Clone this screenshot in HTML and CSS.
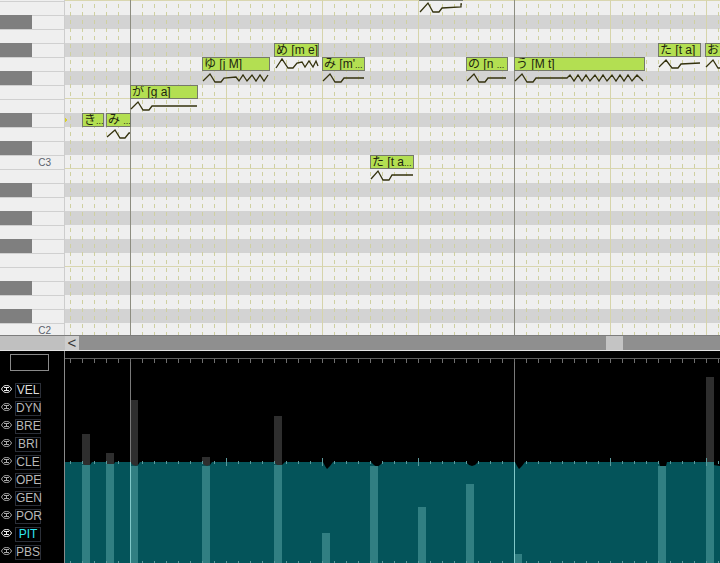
FILE: index.html
```html
<!DOCTYPE html>
<html lang="ja">

<head>
    <meta charset="UTF-8" />
    <title>Piano roll</title>
    <link rel="stylesheet" href="styles.css">
</head>

<body>
    <div class="roll-area">
        <div class="piano">
            <div class="key"></div>
            <div class="key black"></div>
            <div class="key"></div>
            <div class="key black"></div>
            <div class="key"></div>
            <div class="key black"></div>
            <div class="key"></div>
            <div class="key"></div>
            <div class="key black"></div>
            <div class="key"></div>
            <div class="key black"></div>
            <div class="key">C3</div>
            <div class="key"></div>
            <div class="key black"></div>
            <div class="key"></div>
            <div class="key black"></div>
            <div class="key"></div>
            <div class="key black"></div>
            <div class="key"></div>
            <div class="key"></div>
            <div class="key black"></div>
            <div class="key"></div>
            <div class="key black"></div>
            <div class="key">C2</div>
        </div>

        <div class="roll">
            <div class="bands">
                <div class="band"></div>
                <div class="band dark"></div>
                <div class="band"></div>
                <div class="band dark"></div>
                <div class="band"></div>
                <div class="band dark"></div>
                <div class="band"></div>
                <div class="band"></div>
                <div class="band dark"></div>
                <div class="band"></div>
                <div class="band dark"></div>
                <div class="band"></div>
                <div class="band"></div>
                <div class="band dark"></div>
                <div class="band"></div>
                <div class="band dark"></div>
                <div class="band"></div>
                <div class="band dark"></div>
                <div class="band"></div>
                <div class="band"></div>
                <div class="band dark"></div>
                <div class="band"></div>
                <div class="band dark"></div>
                <div class="band"></div>
            </div>

            <!-- viewBox is in page coordinates -->
            <svg class="overlay" viewBox="65 0 655 335">
                <g class="octave-lines">
                    <line x1="65" y1="0.5" x2="720" y2="0.5" />
                    <line x1="65" y1="98.5" x2="720" y2="98.5" />
                    <line x1="65" y1="168.5" x2="720" y2="168.5" />
                    <line x1="65" y1="266.5" x2="720" y2="266.5" />
                </g>
                <g class="sub-lines">
                    <line x1="70.5" y1="4" x2="70.5" y2="335" />
                    <line x1="82.5" y1="4" x2="82.5" y2="335" />
                    <line x1="94.5" y1="4" x2="94.5" y2="335" />
                    <line x1="106.5" y1="4" x2="106.5" y2="335" />
                    <line x1="118.5" y1="4" x2="118.5" y2="335" />
                    <line x1="142.5" y1="4" x2="142.5" y2="335" />
                    <line x1="154.5" y1="4" x2="154.5" y2="335" />
                    <line x1="166.5" y1="4" x2="166.5" y2="335" />
                    <line x1="178.5" y1="4" x2="178.5" y2="335" />
                    <line x1="190.5" y1="4" x2="190.5" y2="335" />
                    <line x1="202.5" y1="4" x2="202.5" y2="335" />
                    <line x1="214.5" y1="4" x2="214.5" y2="335" />
                    <line x1="238.5" y1="4" x2="238.5" y2="335" />
                    <line x1="250.5" y1="4" x2="250.5" y2="335" />
                    <line x1="262.5" y1="4" x2="262.5" y2="335" />
                    <line x1="274.5" y1="4" x2="274.5" y2="335" />
                    <line x1="286.5" y1="4" x2="286.5" y2="335" />
                    <line x1="298.5" y1="4" x2="298.5" y2="335" />
                    <line x1="310.5" y1="4" x2="310.5" y2="335" />
                    <line x1="334.5" y1="4" x2="334.5" y2="335" />
                    <line x1="346.5" y1="4" x2="346.5" y2="335" />
                    <line x1="358.5" y1="4" x2="358.5" y2="335" />
                    <line x1="370.5" y1="4" x2="370.5" y2="335" />
                    <line x1="382.5" y1="4" x2="382.5" y2="335" />
                    <line x1="394.5" y1="4" x2="394.5" y2="335" />
                    <line x1="406.5" y1="4" x2="406.5" y2="335" />
                    <line x1="430.5" y1="4" x2="430.5" y2="335" />
                    <line x1="442.5" y1="4" x2="442.5" y2="335" />
                    <line x1="454.5" y1="4" x2="454.5" y2="335" />
                    <line x1="466.5" y1="4" x2="466.5" y2="335" />
                    <line x1="478.5" y1="4" x2="478.5" y2="335" />
                    <line x1="490.5" y1="4" x2="490.5" y2="335" />
                    <line x1="502.5" y1="4" x2="502.5" y2="335" />
                    <line x1="526.5" y1="4" x2="526.5" y2="335" />
                    <line x1="538.5" y1="4" x2="538.5" y2="335" />
                    <line x1="550.5" y1="4" x2="550.5" y2="335" />
                    <line x1="562.5" y1="4" x2="562.5" y2="335" />
                    <line x1="574.5" y1="4" x2="574.5" y2="335" />
                    <line x1="586.5" y1="4" x2="586.5" y2="335" />
                    <line x1="598.5" y1="4" x2="598.5" y2="335" />
                    <line x1="622.5" y1="4" x2="622.5" y2="335" />
                    <line x1="634.5" y1="4" x2="634.5" y2="335" />
                    <line x1="646.5" y1="4" x2="646.5" y2="335" />
                    <line x1="658.5" y1="4" x2="658.5" y2="335" />
                    <line x1="670.5" y1="4" x2="670.5" y2="335" />
                    <line x1="682.5" y1="4" x2="682.5" y2="335" />
                    <line x1="694.5" y1="4" x2="694.5" y2="335" />
                    <line x1="718.5" y1="4" x2="718.5" y2="335" />
                </g>
                <g class="beat-lines">
                    <line x1="226.5" y1="0" x2="226.5" y2="335" />
                    <line x1="322.5" y1="0" x2="322.5" y2="335" />
                    <line x1="418.5" y1="0" x2="418.5" y2="335" />
                    <line x1="610.5" y1="0" x2="610.5" y2="335" />
                    <line x1="706.5" y1="0" x2="706.5" y2="335" />
                </g>
                <g class="cursor-lines">
                    <line x1="130.5" y1="0" x2="130.5" y2="335" />
                    <line x1="514.5" y1="0" x2="514.5" y2="335" />
                </g>
                <polygon class="marker" points="65,118 68,120 65,122" />
                <g class="waves">
                    <polyline points="107,137 115,130 120,138 125,138 129,133 130,133" />
                    <polyline points="131,109 138,102 143,110 149,110 152,106 197,106" />
                    <polyline points="203,81 210,74 215,82 221,82 224,78 236,77 239,81 243,75 247,81 252,75 256,81 260,75 264,81 268,75" />
                    <polyline points="276,68 282,59 288,68 293,68 297,63 302,62 305,67 309,61 313,67 316,61 318,66" />
                    <polyline points="323,81 330,74 335,82 341,82 344,78 364,78" />
                    <polyline points="371,179 378,171 383,180 389,180 392,175 413,175" />
                    <polyline points="420,12 428,3 433,12 439,12 442,8 461,7 461,4 462,4" />
                    <polyline points="467,81 474,74 479,82 485,82 488,78 506,78" />
                    <polyline points="515,81 522,74 527,82 533,82 536,78 567,78 570,75 574,81 578,75 582,81 586,75 590,81 595,75 599,81 603,75 607,81 612,75 616,81 620,75 624,81 628,75 632,81 637,75 643,81" />
                    <polyline points="659,67 666,60 672,68 678,68 681,64 700,63" />
                    <polyline points="706,67 713,60 718,68 720,68" />
                </g>
            </svg>

            <div class="note n-ki">き<span class="dots">...</span></div>
            <div class="note n-mi">み <span class="dots">...</span></div>
            <div class="note n-ga">が [g a]</div>
            <div class="note n-yu">ゆ [j M]</div>
            <div class="note n-me">め [m e]</div>
            <div class="note n-mi2">み [m'<span class="dots">...</span></div>
            <div class="note n-ta">た [t a<span class="dots">...</span></div>
            <div class="note n-top"></div>
            <div class="note n-no">の [n <span class="dots">...</span></div>
            <div class="note n-u">う [M t]</div>
            <div class="note n-ta2">た [t a]</div>
            <div class="note n-o">お</div>
        </div>
    </div>

    <div class="scrollbar">
        <div class="scroll-corner"></div>
        <div class="scroll-btn">&lt;</div>
        <div class="scroll-track">
            <div class="scroll-thumb"></div>
        </div>
    </div>

    <div class="lower">
        <div class="side">
            <div class="value-box"></div>
            <div class="curve-list">
                <div class="curve-row">
                    <svg class="eye" viewBox="0 0 11 8"><path d="M0.5 4 C2 1 3.5 0.5 5.5 0.5 C7.5 0.5 9 1 10.5 4 C9 7 7.5 7.5 5.5 7.5 C3.5 7.5 2 7 0.5 4 Z M3 2.5 H8 M3 5.5 H8 M5.5 3 V5" /></svg>
                    <div class="curve-label on">VEL</div>
                </div>
                <div class="curve-row">
                    <svg class="eye dim" viewBox="0 0 11 8"><path d="M0.5 4 C2 1 3.5 0.5 5.5 0.5 C7.5 0.5 9 1 10.5 4 C9 7 7.5 7.5 5.5 7.5 C3.5 7.5 2 7 0.5 4 Z M3 2.5 H8 M3 5.5 H8 M5.5 3 V5" /></svg>
                    <div class="curve-label">DYN</div>
                </div>
                <div class="curve-row">
                    <svg class="eye dim" viewBox="0 0 11 8"><path d="M0.5 4 C2 1 3.5 0.5 5.5 0.5 C7.5 0.5 9 1 10.5 4 C9 7 7.5 7.5 5.5 7.5 C3.5 7.5 2 7 0.5 4 Z M3 2.5 H8 M3 5.5 H8 M5.5 3 V5" /></svg>
                    <div class="curve-label">BRE</div>
                </div>
                <div class="curve-row">
                    <svg class="eye dim" viewBox="0 0 11 8"><path d="M0.5 4 C2 1 3.5 0.5 5.5 0.5 C7.5 0.5 9 1 10.5 4 C9 7 7.5 7.5 5.5 7.5 C3.5 7.5 2 7 0.5 4 Z M3 2.5 H8 M3 5.5 H8 M5.5 3 V5" /></svg>
                    <div class="curve-label">BRI</div>
                </div>
                <div class="curve-row">
                    <svg class="eye dim" viewBox="0 0 11 8"><path d="M0.5 4 C2 1 3.5 0.5 5.5 0.5 C7.5 0.5 9 1 10.5 4 C9 7 7.5 7.5 5.5 7.5 C3.5 7.5 2 7 0.5 4 Z M3 2.5 H8 M3 5.5 H8 M5.5 3 V5" /></svg>
                    <div class="curve-label">CLE</div>
                </div>
                <div class="curve-row">
                    <svg class="eye dim" viewBox="0 0 11 8"><path d="M0.5 4 C2 1 3.5 0.5 5.5 0.5 C7.5 0.5 9 1 10.5 4 C9 7 7.5 7.5 5.5 7.5 C3.5 7.5 2 7 0.5 4 Z M3 2.5 H8 M3 5.5 H8 M5.5 3 V5" /></svg>
                    <div class="curve-label">OPE</div>
                </div>
                <div class="curve-row">
                    <svg class="eye dim" viewBox="0 0 11 8"><path d="M0.5 4 C2 1 3.5 0.5 5.5 0.5 C7.5 0.5 9 1 10.5 4 C9 7 7.5 7.5 5.5 7.5 C3.5 7.5 2 7 0.5 4 Z M3 2.5 H8 M3 5.5 H8 M5.5 3 V5" /></svg>
                    <div class="curve-label">GEN</div>
                </div>
                <div class="curve-row">
                    <svg class="eye dim" viewBox="0 0 11 8"><path d="M0.5 4 C2 1 3.5 0.5 5.5 0.5 C7.5 0.5 9 1 10.5 4 C9 7 7.5 7.5 5.5 7.5 C3.5 7.5 2 7 0.5 4 Z M3 2.5 H8 M3 5.5 H8 M5.5 3 V5" /></svg>
                    <div class="curve-label">POR</div>
                </div>
                <div class="curve-row">
                    <svg class="eye" viewBox="0 0 11 8"><path d="M0.5 4 C2 1 3.5 0.5 5.5 0.5 C7.5 0.5 9 1 10.5 4 C9 7 7.5 7.5 5.5 7.5 C3.5 7.5 2 7 0.5 4 Z M3 2.5 H8 M3 5.5 H8 M5.5 3 V5" /></svg>
                    <div class="curve-label active">PIT</div>
                </div>
                <div class="curve-row">
                    <svg class="eye dim" viewBox="0 0 11 8"><path d="M0.5 4 C2 1 3.5 0.5 5.5 0.5 C7.5 0.5 9 1 10.5 4 C9 7 7.5 7.5 5.5 7.5 C3.5 7.5 2 7 0.5 4 Z M3 2.5 H8 M3 5.5 H8 M5.5 3 V5" /></svg>
                    <div class="curve-label">PBS</div>
                </div>
            </div>
        </div>

        <!-- viewBox is in page coordinates -->
        <svg class="curves" viewBox="65 351 655 212">
            <line class="ruler" x1="65" y1="358.5" x2="720" y2="358.5" />
            <line class="ruler-ticks" x1="70" y1="361" x2="720" y2="361" />

            <rect class="vel-bar" x="82" y="434" width="8" height="32" />
            <rect class="vel-bar" x="106" y="453" width="8" height="12" />
            <rect class="vel-bar" x="130" y="400" width="8" height="66" />
            <rect class="vel-bar" x="202" y="457" width="8" height="9" />
            <rect class="vel-bar" x="274" y="416" width="8" height="51" />
            <rect class="vel-bar" x="706" y="377" width="8" height="89" />

            <polygon class="pitch-area" points="65,462 82,462 84,465 87,466 90,465 92,462 106,462 107,464 114,464 115,462 130,462 133,465 136,466 138,465 140,462 202,462 204,465 207,466 210,465 212,462 274,462 277,465 280,467 283,464 285,462 323,462 325,466 327,469 330,466 333,462 371,462 374,465 377,467 380,465 383,462 466,462 469,465 472,466 475,465 478,462 515,462 517,466 519,469 522,466 525,462 659,462 660,466 666,466 667,462 711,462 713,465 720,466 720,563 65,563" />

            <rect class="pit-bar" x="82" y="465" width="8" height="98" />
            <rect class="pit-bar" x="106" y="464" width="8" height="99" />
            <rect class="pit-bar" x="130" y="466" width="8" height="97" />
            <rect class="pit-bar" x="202" y="466" width="8" height="97" />
            <rect class="pit-bar" x="274" y="465" width="8" height="98" />
            <rect class="pit-bar" x="322" y="533" width="8" height="30" />
            <rect class="pit-bar" x="370" y="466" width="8" height="97" />
            <rect class="pit-bar" x="418" y="507" width="8" height="56" />
            <rect class="pit-bar" x="466" y="484" width="8" height="79" />
            <rect class="pit-bar" x="514" y="554" width="8" height="9" />
            <rect class="pit-bar" x="658" y="466" width="8" height="97" />
            <rect class="pit-bar" x="706" y="462" width="8" height="101" />

            <line class="curve-ticks" x1="70" y1="462" x2="720" y2="462" />
            <line class="curve-ticks" x1="70" y1="562" x2="720" y2="562" />
            <line class="beat-tick" x1="226.5" y1="458" x2="226.5" y2="466" />
            <line class="beat-tick" x1="322.5" y1="458" x2="322.5" y2="466" />
            <line class="beat-tick" x1="418.5" y1="458" x2="418.5" y2="466" />
            <line class="beat-tick" x1="610.5" y1="458" x2="610.5" y2="466" />
            <line class="beat-tick" x1="706.5" y1="458" x2="706.5" y2="466" />

            <line class="cursor-dark" x1="130.5" y1="362" x2="130.5" y2="462" />
            <line class="cursor-dark" x1="514.5" y1="362" x2="514.5" y2="462" />
            <line class="cursor-light" x1="130.5" y1="462" x2="130.5" y2="563" />
            <line class="cursor-light" x1="514.5" y1="462" x2="514.5" y2="563" />
        </svg>
    </div>
</body>

</html>
```

FILE: styles.css
```css
html,
body {
    margin: 0;
    padding: 0;
}

body {
    width: 720px;
    height: 563px;
    overflow: hidden;
    display: flex;
    flex-direction: column;
    font-family: "Liberation Sans", "Noto Sans CJK JP", sans-serif;
    background-color: #000;
}

/* Piano roll */
.roll-area {
    display: flex;
    height: 335px;
    overflow: hidden;
    background-color: #efefef;
}

.piano {
    flex: none;
    box-sizing: border-box;
    width: 65px;
    padding-top: 1px;
    border-right: 1px solid #cdcdcd;
    background-color: #efefef;
}

.key {
    position: relative;
    box-sizing: border-box;
    height: 14px;
    padding: 2px 13px 0 0;
    border-top: 1px solid #d0d0d0;
    font-size: 10px;
    line-height: 10px;
    color: #5a5f6c;
    text-align: right;
}

.key.black::before {
    content: "";
    position: absolute;
    top: -1px;
    left: 0;
    width: 32px;
    height: 14px;
    background-color: #7f7f7f;
}

.roll {
    position: relative;
    flex: 1;
    overflow: hidden;
}

.bands {
    padding-top: 1px;
}

.band {
    height: 14px;
    background-color: #efefef;
}

.band.dark {
    background-color: #d3d3d3;
}

.overlay {
    position: absolute;
    top: 0;
    left: 0;
    width: 655px;
    height: 335px;
    shape-rendering: crispEdges;
}

.octave-lines line {
    stroke: #d9d6b0;
}

.sub-lines line {
    stroke: #cfd0a0;
    stroke-dasharray: 4 4;
}

.beat-lines line {
    stroke: #d6d4aa;
}

.cursor-lines line {
    stroke: #8d8d80;
}

.marker {
    fill: #d8cf2e;
}

.waves polyline {
    fill: none;
    stroke: #34320e;
    stroke-width: 1.3;
    shape-rendering: auto;
}

.note {
    position: absolute;
    box-sizing: border-box;
    height: 14px;
    padding-left: 1px;
    overflow: hidden;
    border: 1px solid #75796a;
    background-color: #b3df52;
    font-size: 12px;
    line-height: 12px;
    white-space: pre;
    color: #1d2410;
}

.dots {
    font-size: 9px;
}

.n-ki { left: 17px; top: 113px; width: 22px; }
.n-mi { left: 41px; top: 113px; width: 25px; }
.n-ga { left: 65px; top: 85px; width: 68px; }
.n-yu { left: 137px; top: 57px; width: 68px; }
.n-me { left: 209px; top: 43px; width: 45px; }
.n-mi2 { left: 257px; top: 57px; width: 43px; }
.n-ta { left: 305px; top: 155px; width: 44px; }
.n-top { left: 354px; top: -13px; width: 44px; }
.n-no { left: 401px; top: 57px; width: 42px; }
.n-u { left: 449px; top: 57px; width: 131px; }
.n-ta2 { left: 593px; top: 43px; width: 43px; }
.n-o { left: 640px; top: 43px; width: 30px; }

/* Scroll bar */
.scrollbar {
    display: flex;
    flex: none;
    box-sizing: border-box;
    height: 16px;
    border-top: 1px solid #7d7d7d;
    border-bottom: 1px solid #e4e4e4;
    background-color: #c0c0c0;
}

.scroll-corner {
    flex: none;
    width: 65px;
}

.scroll-btn {
    flex: none;
    width: 14px;
    background-color: #cdcdcd;
    font-size: 15px;
    line-height: 13px;
    text-align: center;
    color: #333;
}

.scroll-track {
    position: relative;
    flex: 1;
    background-color: #8f8f8f;
}

.scroll-thumb {
    position: absolute;
    top: 0;
    bottom: 0;
    left: 527px;
    width: 17px;
    background-color: #c4c4c4;
}

/* Control curves */
.lower {
    display: flex;
    flex: none;
    height: 212px;
}

.side {
    flex: none;
    box-sizing: border-box;
    width: 65px;
    padding-top: 3px;
    border-right: 1px solid #8a8a8a;
}

.value-box {
    box-sizing: border-box;
    width: 39px;
    height: 17px;
    margin-left: 10px;
    border: 1px solid #8a8a8a;
}

.curve-list {
    display: flex;
    flex-direction: column;
    gap: 3px;
    margin-top: 12px;
}

.curve-row {
    display: flex;
    align-items: center;
    gap: 3px;
    padding-left: 1px;
}

.eye {
    flex: none;
    width: 11px;
    height: 8px;
    margin-top: -4px;
}

.eye path {
    fill: none;
    stroke: #f0f0f0;
    stroke-width: 1;
}

.eye.dim path {
    stroke: #a8a8a8;
}

.curve-label {
    box-sizing: border-box;
    width: 26px;
    height: 15px;
    border: 1px solid #2b2f38;
    font-size: 12px;
    line-height: 13px;
    text-align: center;
    color: #b8b8b8;
}

.curve-label.on {
    color: #dcdcdc;
}

.curve-label.active {
    color: #2fe6f2;
}

.curves {
    flex: none;
    width: 655px;
    height: 212px;
    shape-rendering: crispEdges;
}

.ruler {
    stroke: #5f5f5f;
}

.ruler-ticks {
    stroke: #6e6e6e;
    stroke-width: 4;
    stroke-dasharray: 1 11;
}

.vel-bar {
    fill: #2e2e2e;
}

.pitch-area {
    fill: #04545a;
    shape-rendering: auto;
}

.pit-bar {
    fill: #317f82;
}

.curve-ticks {
    stroke: #5d9a9c;
    stroke-width: 3;
    stroke-dasharray: 1 11;
}

.beat-tick {
    stroke: #5d9a9c;
}

.cursor-dark {
    stroke: #7a7a7a;
}

.cursor-light {
    stroke: #80c8c8;
}
```
